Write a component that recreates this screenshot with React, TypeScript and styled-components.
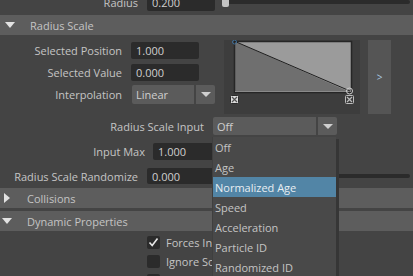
import styled, { createGlobalStyle } from "styled-components";

const GlobalStyle = createGlobalStyle`
  html, body {
    margin: 0;
    padding: 0;
    background: #444444;
    overflow: hidden;
  }
`;

const Panel = styled.div`
  position: relative;
  width: 413px;
  height: 276px;
  overflow: hidden;
  background: #444444;
  font-family: "Open Sans", "DejaVu Sans", sans-serif;
  font-size: 11px;
  color: #c4c4c4;
`;

const Row = styled.div<{ $top: number; $h: number }>`
  display: flex;
  align-items: center;
  margin-top: ${(p) => p.$top}px;
  height: ${(p) => p.$h}px;
`;

const Label = styled.div<{ $w: number; $gap: number }>`
  width: ${(p) => p.$w}px;
  margin-right: ${(p) => p.$gap}px;
  flex-shrink: 0;
  text-align: right;
  white-space: nowrap;
`;

const Field = styled.div<{ $w: number }>`
  width: ${(p) => p.$w}px;
  height: 100%;
  flex-shrink: 0;
  box-sizing: border-box;
  background: #2b2b2b;
  border-radius: 2px;
  padding-left: 5px;
  display: flex;
  align-items: center;
  color: #cfcfcf;
`;

const Track = styled.div`
  flex: 1;
  position: relative;
  height: 4px;
  margin-left: 7px;
  margin-right: 3px;
  background: #2b2b2b;
  border-radius: 2px;
`;

const Handle = styled.div`
  position: absolute;
  left: 0;
  top: -3px;
  width: 7px;
  height: 10px;
  border-radius: 2px;
  background: #c4c4c4;
`;

const Header = styled.div<{ $top: number; $indent: number }>`
  display: flex;
  align-items: center;
  margin-top: ${(p) => p.$top}px;
  height: 20px;
  background: #5d5d5d;
  padding-left: ${(p) => p.$indent}px;
  color: #c4c4c4;
`;

const Caret = styled.div<{ $open: boolean }>`
  width: 0;
  height: 0;
  margin-right: ${(p) => (p.$open ? 15 : 17)}px;
  ${(p) =>
    p.$open
      ? `border-left: 5px solid transparent;
         border-right: 5px solid transparent;
         border-top: 6px solid #e2e2e2;`
      : `border-top: 5.5px solid transparent;
         border-bottom: 5.5px solid transparent;
         border-left: 6px solid #e2e2e2;`}
`;

const SectionBody = styled.div`
  display: flex;
  margin-top: 5px;
  height: 74px;
`;

const LeftColumn = styled.div`
  width: 224px;
  display: flex;
  flex-direction: column;
`;

const Select = styled.div`
  display: flex;
  height: 100%;
  gap: 2px;
`;

const SelectMain = styled.div<{ $w: number }>`
  width: ${(p) => p.$w}px;
  box-sizing: border-box;
  background: #5b5b5b;
  border-radius: 2px 0 0 2px;
  padding-left: 4px;
  display: flex;
  align-items: center;
  color: #cfcfcf;
`;

const SelectArrow = styled.div`
  width: 19px;
  background: #5b5b5b;
  border-radius: 0 2px 2px 0;
  display: flex;
  align-items: center;
  justify-content: center;

  &::after {
    content: "";
    border-left: 5px solid transparent;
    border-right: 5px solid transparent;
    border-top: 5px solid #cfcfcf;
  }
`;

const RampBox = styled.div`
  width: 136px;
  height: 74px;
  background: #3d3d3d;
`;

const SideButton = styled.div`
  width: 23px;
  height: 74px;
  margin-left: 8px;
  background: #555555;
  display: flex;
  align-items: center;
  justify-content: center;
  color: #aac8e0;
  font-size: 10px;
`;

const CheckRow = styled.div<{ $top: number }>`
  display: flex;
  align-items: center;
  gap: 6px;
  margin-top: ${(p) => p.$top}px;
  margin-left: 147px;
  height: 13px;
  white-space: nowrap;
`;

const Box = styled.div`
  width: 13px;
  height: 13px;
  flex-shrink: 0;
  background: #2b2b2b;
  border-radius: 2px;
  display: flex;
  align-items: center;
  justify-content: center;
`;

const Menu = styled.div`
  position: absolute;
  left: 212px;
  top: 137px;
  width: 123px;
  background: #494949;
  box-shadow: 3px 2px 0 #363636;
  border-left: 1px solid #3f3f3f;
`;

const MenuItem = styled.div<{ $active?: boolean }>`
  height: 20px;
  display: flex;
  align-items: center;
  padding-left: 2px;
  background: ${(p) => (p.$active ? "#5285a6" : "transparent")};
  color: ${(p) => (p.$active ? "#e8eef2" : "#c4c4c4")};
`;

function Ramp() {
  return (
    <RampBox>
      <svg width="136" height="74" viewBox="0 0 136 74">
        <rect x="10" y="1" width="118" height="52" fill="#9b9b9b" />
        <polygon points="10,1 128,53 10,53" fill="#6f6f6f" />
        <rect x="10.5" y="1.5" width="117" height="51" fill="none" stroke="#262626" strokeWidth="1.5" />
        <line x1="11" y1="51.5" x2="127" y2="51.5" stroke="#8a8a8a" strokeWidth="1" />
        <line x1="10" y1="1" x2="126" y2="51" stroke="#1e1e1e" strokeWidth="1" />
        <circle cx="10.5" cy="2" r="2" fill="none" stroke="#3f6f9a" strokeWidth="1" />
        <circle cx="125.5" cy="51" r="3" fill="none" stroke="#d0d0d0" strokeWidth="1" />
        <rect x="6.5" y="55.5" width="8" height="8" rx="1" fill="#dcdcdc" stroke="#2a2a2a" />
        <path d="M8 57 L13 62 M13 57 L8 62" stroke="#555" strokeWidth="1.2" />
        <rect x="121.5" y="55.5" width="8" height="8" rx="1" fill="#3a3a3a" stroke="#bbbbbb" />
        <path d="M123 57 L128 62 M128 57 L123 62" stroke="#bbbbbb" strokeWidth="1.2" />
      </svg>
    </RampBox>
  );
}

const menuItems = [
  "Off",
  "Age",
  "Normalized Age",
  "Speed",
  "Acceleration",
  "Particle ID",
  "Randomized ID",
];

export default function App() {
  return (
    <Panel>
      <GlobalStyle />
      {/* Radius (cut off at top) */}
      <Row $top={-7} $h={18}>
        <Label $w={138} $gap={9}>Radius</Label>
        <Field $w={68}>0.200</Field>
        <Track>
          <Handle />
        </Track>
      </Row>

      <Header $top={4} $indent={5}>
        <Caret $open />
        Radius Scale
      </Header>

      <SectionBody>
        <LeftColumn>
          <Row $top={2} $h={17}>
            <Label $w={122} $gap={9}>Selected Position</Label>
            <Field $w={68}>1.000</Field>
          </Row>
          <Row $top={5} $h={17}>
            <Label $w={122} $gap={9}>Selected Value</Label>
            <Field $w={68}>0.000</Field>
          </Row>
          <Row $top={4} $h={19}>
            <Label $w={122} $gap={10}>Interpolation</Label>
            <Select>
              <SelectMain $w={62}>Linear</SelectMain>
              <SelectArrow />
            </Select>
          </Row>
        </LeftColumn>
        <Ramp />
        <SideButton>&gt;</SideButton>
      </SectionBody>

      <Row $top={3} $h={18}>
        <Label $w={204} $gap={9}>Radius Scale Input</Label>
        <Select>
          <SelectMain $w={103}>Off</SelectMain>
          <SelectArrow />
        </Select>
      </Row>
      <Row $top={8} $h={17}>
        <Label $w={145} $gap={8}>Input Max</Label>
        <Field $w={68}>1.000</Field>
      </Row>
      <Row $top={8} $h={16}>
        <Label $w={138} $gap={9}>Radius Scale Randomize</Label>
        <Field $w={68}>0.000</Field>
        <Track />
      </Row>

      <Header $top={4} $indent={4}>
        <Caret $open={false} />
        Collisions
      </Header>
      <Header $top={3} $indent={2}>
        <Caret $open />
        Dynamic Properties
      </Header>

      <CheckRow $top={5}>
        <Box>
          <svg width="11" height="11" viewBox="0 0 11 11">
            <path d="M1.5 5.5 L4.2 8.5 L9.5 1.5" fill="none" stroke="#e6e6e6" strokeWidth="1.6" />
          </svg>
        </Box>
        Forces In World
      </CheckRow>
      <CheckRow $top={6}>
        <Box />
        Ignore Solver Gravity
      </CheckRow>
      <CheckRow $top={6}>
        <Box>
          <svg width="11" height="11" viewBox="0 0 11 11">
            <path d="M1.5 5.5 L4.2 8.5 L9.5 1.5" fill="none" stroke="#e6e6e6" strokeWidth="1.6" />
          </svg>
        </Box>
        Ignore Solver Wind
      </CheckRow>

      <Menu>
        {menuItems.map((item) => (
          <MenuItem key={item} $active={item === "Normalized Age"}>
            {item}
          </MenuItem>
        ))}
      </Menu>
    </Panel>
  );
}
